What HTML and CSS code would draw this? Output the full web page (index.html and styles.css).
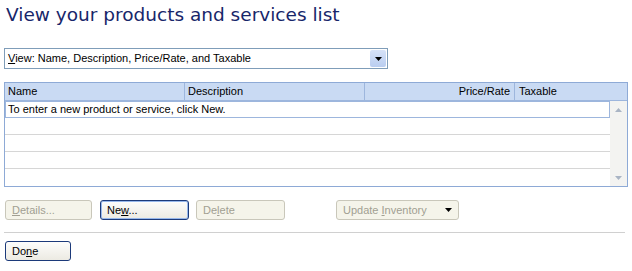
FILE: index.html
```html
<!DOCTYPE html>
<html>
<head>
<meta charset="utf-8">
<link rel="stylesheet" href="styles.css">
</head>
<body>
<div class="page">
  <h1 class="title">View your products and services list</h1>
  <div class="combo">
    <span class="combo-text"><u>V</u>iew: Name, Description, Price/Rate, and Taxable</span>
    <span class="combo-btn"><svg width="7" height="4" viewBox="0 0 7 4"><path d="M0 0H7L3.5 4Z" fill="#000"/></svg></span>
  </div>
  <div class="table">
    <div class="thead">
      <div class="th c-name">Name</div>
      <div class="th c-desc">Description</div>
      <div class="th c-price">Price/Rate</div>
      <div class="th c-tax">Taxable</div>
      <div class="th c-rest"></div>
    </div>
    <div class="tbody">
      <div class="rows">
        <div class="row first">To enter a new product or service, click New.</div>
        <div class="row"></div>
        <div class="row"></div>
        <div class="row"></div>
        <div class="row last"></div>
      </div>
      <div class="scrollbar">
        <svg width="7" height="4" viewBox="0 0 7 4" class="up"><path d="M0 4H7L3.5 0Z" fill="#a9b4c4"/></svg>
        <svg width="7" height="4" viewBox="0 0 7 4" class="down"><path d="M0 0H7L3.5 4Z" fill="#a9b4c4"/></svg>
      </div>
    </div>
  </div>
  <div class="actions">
    <button class="btn disabled w-details"><u>D</u>etails...</button>
    <button class="btn default w-new">Ne<u>w</u>...</button>
    <button class="btn disabled w-delete">De<u>l</u>ete</button>
    <button class="btn disabled w-update"><span>Update <u>I</u>nventory</span><svg width="7" height="4" viewBox="0 0 7 4"><path d="M0 0H7L3.5 4Z" fill="#000"/></svg></button>
  </div>
  <div class="sep"></div>
  <div class="footer">
    <button class="btn w-done">Do<u>n</u>e</button>
  </div>
</div>
</body>
</html>
```
FILE: styles.css
```css
* { box-sizing: border-box; }
html, body { margin: 0; padding: 0; background: #fff; }
body { font-family: "Liberation Sans", Arial, sans-serif; font-size: 11px; color: #000; width: 632px; height: 271px; overflow: hidden; }
.page { padding: 0 4px 0 4px; }
.title { margin: 0; padding: 4px 0 0 2px; height: 48px; font-family: "DejaVu Sans", sans-serif; font-weight: normal; font-size: 18.5px; color: #17266a; letter-spacing: 0; }
.combo { width: 384px; height: 21px; border: 1px solid #7f9db9; display: flex; align-items: stretch; }
.combo-text { flex: 1; padding: 3px 0 0 3px; }
.combo-btn { width: 16px; margin: 1px; background: linear-gradient(#d6e2f8, #b9cdf0); border-radius: 2px; display: flex; align-items: center; justify-content: center; }
.table { margin-top: 13px; width: 624px; height: 105px; border: 1px solid #8eaad6; display: flex; flex-direction: column; }
.thead { display: flex; height: 18px; background: #c9daf3; border-bottom: 1px solid #9db6dd; }
.th { padding: 2px 0 0 3px; border-right: 1px solid #9db6dd; height: 17px; }
.c-name { width: 180px; }
.c-desc { width: 180px; }
.c-price { width: 150px; text-align: right; padding-right: 4px; }
.c-tax { width: 84px; padding-left: 4px; border-right: none; }
.c-rest { flex: 1; border-right: none; }
.tbody { flex: 1; display: flex; }
.rows { flex: 1; display: flex; flex-direction: column; }
.row { height: 17px; border-bottom: 1px solid #d6d6d6; }
.row.first { border: 1px solid #9db6dd; height: 17px; padding: 1px 0 0 2px; }
.row.last { border-bottom: none; flex: 1; }
.scrollbar { width: 17px; background: #f3f3f1; display: flex; flex-direction: column; justify-content: space-between; align-items: center; padding: 7px 0 6px; }
.actions { display: flex; margin-top: 13px; height: 20px; }
.btn { font-family: "Liberation Sans", Arial, sans-serif; font-size: 11px; height: 20px; padding: 0 0 0 6px; text-align: left; border: 1px solid #9c9b8e; border-radius: 3px; background: linear-gradient(#fdfdfc, #eceae2); color: #000; margin: 0 0 0 1px; }
.btn.disabled { background: #f5f4ea; border-color: #c9c7ba; color: #a19f92; }
.btn.default { border: 1px solid #1c3a7a; box-shadow: inset 0 0 0 1px #97b8ec; }
.w-details { width: 87px; }
.w-new { width: 89px; margin-left: 8px; }
.w-delete { width: 89px; margin-left: 7px; }
.w-update { width: 123px; margin-left: 51px; display: flex; align-items: center; justify-content: space-between; padding-right: 6px; }
.sep { margin-top: 12px; width: 621px; height: 1px; background: #d0d0d0; }
.footer { margin-top: 8px; }
.w-done { width: 66px; border-color: #1c3a7a; }
```
